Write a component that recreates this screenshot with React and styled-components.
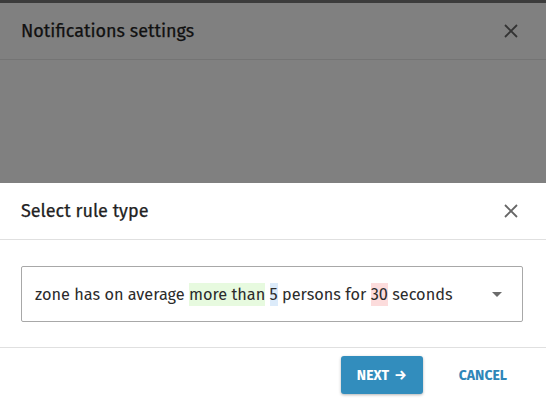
import React from "react";
import styled, { createGlobalStyle } from "styled-components";

const Global = createGlobalStyle`
  html, body { margin: 0; padding: 0; }
  body { font-family: "Fira Sans", "Open Sans", "Noto Sans", sans-serif; background: #808080; }
`;

const Page = styled.div`
  width: 546px;
  height: 402px;
  display: flex;
  flex-direction: column;
  overflow: hidden;
  background: #808080;
`;

const TopBar = styled.div`
  height: 3px;
  background: #3c3c3c;
  flex: none;
`;

const Header = styled.div`
  height: 57px;
  flex: none;
  display: flex;
  align-items: center;
  justify-content: space-between;
  padding: 0 28px 0 21px;
  border-bottom: 1px solid ${(p) => p.$line};
  box-sizing: border-box;
`;

const Title = styled.div`
  font-size: 18px;
  font-weight: 400;
  color: ${(p) => p.$color};
  -webkit-text-stroke: 0.25px ${(p) => p.$color};
`;

const Spacer = styled.div`
  flex: 1;
`;

const Sheet = styled.div`
  flex: none;
  height: 219px;
  background: #fff;
  display: flex;
  flex-direction: column;
`;

const Body = styled.div`
  padding: 26px 23px 25px 21px;
  border-bottom: 1px solid #e0e0e0;
`;

const Select = styled.div`
  height: 56px;
  box-sizing: border-box;
  border: 1px solid #a8a8a8;
  border-radius: 2px;
  display: flex;
  align-items: center;
  justify-content: space-between;
  padding: 0 20px 0 13px;
`;

const SelectText = styled.div`
  font-size: 16.3px;
  color: #2b2b2b;
`;

const Mark = styled.span`
  background: ${(p) => p.$bg};
  padding: 2px 0;
`;

const Caret = styled.div`
  width: 0;
  height: 0;
  border-left: 5px solid transparent;
  border-right: 5px solid transparent;
  border-top: 5px solid #6b6b6b;
`;

const Footer = styled.div`
  flex: 1;
  display: flex;
  align-items: flex-start;
  justify-content: flex-end;
  padding: 8px 23px 0 0;
  gap: 20px;
`;

const Button = styled.button`
  font-family: inherit;
  font-size: 14px;
  font-weight: 700;
  border: none;
  border-radius: 3px;
  height: 38px;
  cursor: pointer;
  display: flex;
  align-items: center;
  gap: 5px;
  background: ${(p) => (p.$primary ? "#328dbd" : "transparent")};
  color: ${(p) => (p.$primary ? "#fff" : "#2e86b8")};
  box-shadow: ${(p) => (p.$primary ? "0 1px 3px rgba(0,0,0,0.3)" : "none")};
  padding: 0 16px;
`;

const CloseIcon = ({ color }) => (
  <svg width="14" height="14" viewBox="0 0 14 14">
    <path d="M1 1L13 13M13 1L1 13" stroke={color} strokeWidth="1.8" fill="none" />
  </svg>
);

export default function App() {
  return (
    <>
      <Global />
      <Page>
        <TopBar />
        <Header $line="#747474">
          <Title $color="#111">Notifications settings</Title>
          <CloseIcon color="#333" />
        </Header>
        <Spacer />
        <Sheet>
          <Header $line="#e0e0e0">
            <Title $color="#222">Select rule type</Title>
            <CloseIcon color="#666" />
          </Header>
          <Body>
            <Select>
              <SelectText>
                zone has on average <Mark $bg="#e7fadf">more than</Mark>{" "}
                <Mark $bg="#dcebfa">5</Mark> persons for{" "}
                <Mark $bg="#fcdcdc">30</Mark> seconds
              </SelectText>
              <Caret />
            </Select>
          </Body>
          <Footer>
            <Button $primary>
              NEXT <span>→</span>
            </Button>
            <Button>CANCEL</Button>
          </Footer>
        </Sheet>
      </Page>
    </>
  );
}
